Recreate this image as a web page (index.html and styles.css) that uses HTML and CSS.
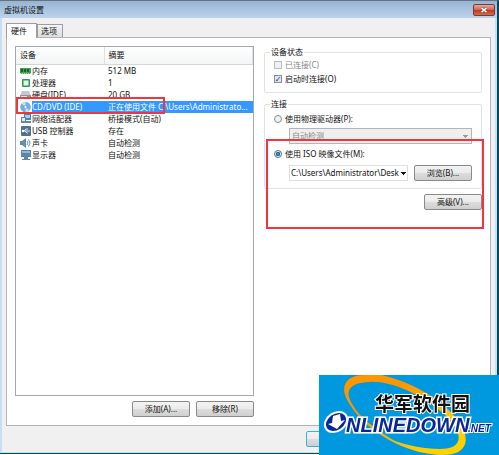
FILE: index.html
```html
<!DOCTYPE html>
<html lang="zh-CN">

<head>
    <meta charset="UTF-8">
    <meta name="viewport" content="width=device-width, initial-scale=1.0">
    <title>虚拟机设置</title>
    <link rel="stylesheet" href="styles.css">
</head>

<body>
    <div class="window">
        <header class="title-bar">
            <h1>虚拟机设置</h1>
            <button class="close-button" aria-label="关闭">
                <svg width="8" height="6" viewBox="0 0 8 6"><path d="M1.500 .8l5 4.400M6.500 .8l-5 4.400" stroke="#6b2a22" stroke-width="2.600"/><path d="M1.500 .8l5 4.400M6.500 .8l-5 4.400" stroke="#fff" stroke-width="1.600"/></svg>
            </button>
        </header>

        <nav class="tabs">
            <button class="tab active">硬件</button>
            <button class="tab">选项</button>
        </nav>

        <main class="panel">
            <!-- Device list -->
            <section class="devices">
                <div class="device-list">
                    <table>
                        <thead>
                            <tr><th class="device-col">设备</th><th>摘要</th></tr>
                        </thead>
                        <tbody>
                            <tr>
                                <td><div class="device"><svg class="icon" viewBox="0 0 12 12"><path fill="#3fa552" d="M0 3h11v6H0z"/><path fill="#1c5f2c" d="M1 4h2v3H1zM4 4h2v3H4zM7 4h2v3H7z"/><path stroke="#a5dcae" stroke-dasharray="1 1" d="M0 8.500h11"/></svg><span>内存</span></div></td>
                                <td>512 MB</td>
                            </tr>
                            <tr>
                                <td><div class="device"><svg class="icon" viewBox="0 0 12 12"><rect x="2" y="2" width="8" height="8" rx="1" fill="#2d9a52"/><path fill="#e8f5ea" d="M3.500 3.500h5v5h-5z"/></svg><span>处理器</span></div></td>
                                <td>1</td>
                            </tr>
                            <tr>
                                <td><div class="device"><svg class="icon" viewBox="0 0 12 12"><path fill="#c3c9cf" d="M2 2h7l2 5H0z"/><path fill="#8d97a1" d="M0 6h11v4H0z"/><path fill="#dfe5ea" d="M1 7h6v1H1z"/></svg><span>硬盘(IDE)</span></div></td>
                                <td>20 GB</td>
                            </tr>
                            <tr class="selected">
                                <td><div class="device"><svg class="icon" viewBox="0 0 12 12"><circle cx="5.500" cy="6" r="5.300" fill="#6fb0e4"/><path fill="#c3e0f6" d="M5.500 6L1.500 2.500a5.300 5.300 0 0 1 4-1.800zM5.500 6l4 3.500a5.300 5.300 0 0 1-4 1.800z"/><circle cx="5.500" cy="6" r="1.500" fill="#fff" stroke="#5c91c4" stroke-width=".6"/></svg><span>CD/DVD (IDE)</span></div></td>
                                <td>正在使用文件 C:\Users\Administrato...</td>
                            </tr>
                            <tr>
                                <td><div class="device"><svg class="icon" viewBox="0 0 12 12"><path fill="#4386b8" d="M4 1h7v6H4z"/><path fill="#a5d2ee" d="M5 2h5v3H5z"/><path fill="#5d89a6" d="M1 4h5v6H1zM6 8h5v2H6z"/><path fill="#d9edf7" d="M2 5h3v3H2z"/></svg><span>网络适配器</span></div></td>
                                <td>桥接模式(自动)</td>
                            </tr>
                            <tr>
                                <td><div class="device"><svg class="icon" viewBox="0 0 12 12"><rect x="1" y="1" width="10" height="10" rx="1" fill="#50708f"/><path fill="none" stroke="#fff" stroke-width=".8" d="M2 6h8M4 6l2-2h2M5 6l2 2h1"/><circle cx="3" cy="6" r="1.200" fill="#fff"/></svg><span>USB 控制器</span></div></td>
                                <td>存在</td>
                            </tr>
                            <tr>
                                <td><div class="device"><svg class="icon" viewBox="0 0 12 12"><path fill="#6c8ba5" d="M0 4h2l4-3v10L2 8H0z"/><path fill="none" stroke="#4c9bd5" d="M7 4q2 2 0 4M8.500 2.500q3 3.500 0 7"/></svg><span>声卡</span></div></td>
                                <td>自动检测</td>
                            </tr>
                            <tr>
                                <td><div class="device"><svg class="icon" viewBox="0 0 12 12"><path fill="#5b86ab" d="M1 1h10v7H1zM4 8h4v2H4zM2 10h8v1H2z"/><path fill="#8db7d8" d="M2 2h8v2H2z"/></svg><span>显示器</span></div></td>
                                <td>自动检测</td>
                            </tr>
                        </tbody>
                    </table>
                    <div class="highlight device-highlight"></div>
                </div>
                <div class="device-actions">
                    <button class="button">添加(A)...</button>
                    <button class="button">移除(R)</button>
                </div>
            </section>

            <!-- Device settings -->
            <section class="settings">
                <fieldset class="status-group">
                    <legend>设备状态</legend>
                    <label class="option disabled"><input type="checkbox" disabled>已连接(C)</label>
                    <label class="option"><input type="checkbox" checked>启动时连接(O)</label>
                </fieldset>

                <fieldset class="connection-group">
                    <legend>连接</legend>
                    <label class="option"><input type="radio" name="connection">使用物理驱动器(P):</label>
                    <select class="drive-select" aria-label="物理驱动器" disabled>
                        <option>自动检测</option>
                    </select>
                    <label class="option"><input type="radio" name="connection" checked>使用 ISO 映像文件(M):</label>
                    <div class="iso-row">
                        <select class="iso-select" aria-label="ISO 映像文件">
                            <option>C:\Users\Administrator\Desk</option>
                        </select>
                        <button class="button">浏览(B)...</button>
                    </div>
                </fieldset>

                <button class="button advanced">高级(V)...</button>
                <div class="highlight iso-highlight"></div>
            </section>
        </main>

        <footer class="dialog-actions">
            <button class="button default" aria-label="确定"></button>
        </footer>
    </div>

    <!-- Site logo -->
    <svg class="watermark" viewBox="0 0 180 80" role="img" aria-label="华军软件园 ONLINEDOWN.NET">
        <defs>
            <linearGradient id="ring" x1="0" y1="0" x2="1" y2="1">
                <stop offset=".3" stop-color="#ff9600"/>
                <stop offset=".8" stop-color="#ffd000"/>
            </linearGradient>
        </defs>
        <path fill="#0099e0" d="M0 0h180v80H0z"/>
        <path fill="url(#ring)" fill-rule="evenodd" d="M46 0C26 0 20 12 30 28C40 46 60 60 76 68C90 75 108 80 124 80C150 80 153 62 137 43C120 22 90 6 62 0zM50 7C68 5 100 17 124 38C144 56 147 74 121 74C104 74 88 70 76 66C62 58 42 44 35 32C24 16 30 8 50 7z"/>
        <text class="logo-name" x="56" y="36">华军软件园</text>
        <text class="logo-domain" x="27" y="57">NLINEDOWN</text>
        <text class="logo-tld" x="149" y="57">.NET</text>
        <ellipse cx="17" cy="47" rx="12" ry="9" fill="#0a2596" stroke="#fff" stroke-width="2" transform="rotate(-35 17 47)"/>
        <path fill="#fff" d="M14 41l7-2 1 7 4-1-8 9-9-5 4-1z"/>
    </svg>
</body>

</html>
```

FILE: styles.css
```css
* {
    box-sizing: border-box;
}

body {
    margin: 0;
    background-color: #fff;
    color: #111;
    font-family: "Noto Sans", "Noto Sans CJK SC", sans-serif;
    font-size: 8px;
    line-height: 12px;
}

button,
select,
input {
    margin: 0;
    font: inherit;
    color: inherit;
}

.window {
    display: flex;
    flex-direction: column;
    min-height: calc(100vh - 1px);
    border-top: 1px solid #66727e;
    border-right: 2px solid #064a58;
    border-bottom: 1px solid #064a58;
    background-color: #f0f0f0;
    box-shadow: inset 2px -1px #c5dff5, inset -2px 0 #c5dff5;
}

.title-bar {
    display: flex;
    justify-content: space-between;
    align-items: center;
    height: 17px;
    padding: 0 2px 0 4px;
    background: linear-gradient(#97b4d2, #bcd3ed);
}

.title-bar h1 {
    margin: 0;
    font-size: 8px;
    font-weight: normal;
}

.close-button {
    display: flex;
    align-items: center;
    justify-content: center;
    width: 22px;
    height: 12px;
    padding: 0;
    border: 1px solid #7a3a35;
    border-radius: 2px;
    background: linear-gradient(#e6a99c, #cf6450 50%, #c0341c 50%, #d46a50);
}

.tabs {
    display: flex;
    align-items: flex-end;
    height: 19px;
    padding-left: 6px;
}

.tab {
    height: 13px;
    padding: 0 5px 0 3px;
    border: 1px solid #9a9da1;
    border-bottom: 0;
    background: linear-gradient(#f4f4f4, #dcdcdc);
    line-height: 12px;
}

.tab.active {
    position: relative;
    height: 15px;
    margin-bottom: -1px;
    padding: 0 9px 0 4px;
    background: #fff;
}

.panel {
    display: flex;
    flex: 1;
    gap: 10px;
    margin: 0 6px;
    padding: 8px;
    border: 1px solid #b4b4b8;
    background-color: #fff;
}

.devices {
    display: flex;
    flex: 239;
    flex-direction: column;
    min-width: 0;
}

.device-list {
    position: relative;
    flex: 1;
    border: 1px solid #a5a9b0;
}

table {
    width: 100%;
    border-collapse: collapse;
    table-layout: fixed;
}

th,
td {
    padding: 0 0 0 4px;
    font-weight: normal;
    text-align: left;
    white-space: nowrap;
}

th {
    height: 17px;
    border-bottom: 1px solid #d5d5d5;
    border-right: 1px solid #e0e0e0;
    background: linear-gradient(#fff, #f3f4f5);
}

.device-col {
    width: 88px;
}

.device {
    display: flex;
    height: 12px;
}

.icon {
    flex: none;
    width: 12px;
    height: 12px;
}

.device span {
    flex: 1;
}

.selected td:last-child,
.selected span {
    background-color: #3399ff;
    color: #fff;
}

.device-actions {
    display: flex;
    justify-content: flex-end;
    gap: 6px;
    padding-top: 5px;
}

.button {
    width: 58px;
    height: 16px;
    padding: 0;
    border: 1px solid #8a8a8a;
    border-radius: 2px;
    background: linear-gradient(#f2f2f2, #ebebeb 50%, #dddddd 50%, #cfcfcf);
    line-height: 12px;
}

.settings {
    position: relative;
    display: flex;
    flex: 218;
    flex-direction: column;
    min-width: 0;
}

fieldset {
    min-width: 0;
    margin: 0;
    padding: 0 9px;
    border: 1px solid #dce4ea;
    border-radius: 2px;
}

legend {
    padding: 0 1px;
    margin-left: -4px;
}

.status-group {
    height: 47px;
}

.connection-group {
    height: 91px;
    margin-top: 5px;
    padding-top: 2px;
}

.option {
    display: flex;
    align-items: center;
    gap: 3px;
    height: 14px;
}

.option.disabled {
    color: #888;
}

input {
    display: flex;
    align-items: center;
    justify-content: center;
    appearance: none;
    width: 8px;
    height: 8px;
    border: 1px solid #8e8f8f;
    background-color: #eef1f5;
}

input:disabled {
    border-color: #bbb;
}

input[type="checkbox"]:checked {
    background-color: #dbe4f3;
}

input[type="checkbox"]:checked::before {
    content: "✓";
    color: #273b91;
    font: bold 8px "DejaVu Sans", sans-serif;
}

input[type="radio"] {
    border-radius: 50%;
}

input[type="radio"]:checked {
    border-color: #52718a;
    background: radial-gradient(#4fc3f0, #0c4f7d 45%, #eee 55%);
}

select {
    appearance: none;
    height: 16px;
    padding: 0 16px 0 2px;
    border: 1px solid #dddfe3;
    border-radius: 0;
    background: #fff conic-gradient(from -45deg at 50% 100%, #111 90deg, transparent 0) no-repeat right 3px center / 6px 3px;
}

.drive-select {
    display: block;
    width: calc(100% - 15px);
    margin: 2px 0 3px 15px;
    background-color: #efefef;
    background-image: conic-gradient(from -45deg at 50% 100%, #999 90deg, transparent 0);
    border-color: #b5b5b5;
    color: #888;
    opacity: 1;
}

.iso-row {
    display: flex;
    gap: 6px;
    margin: 4px 0 0 15px;
}

.iso-select {
    flex: 1;
    min-width: 0;
    padding: 0 7px 0 1px;
    background-position: right 1px center;
    background-size: 5px 3px;
}

.advanced {
    align-self: flex-end;
    margin-top: 5px;
}

.highlight {
    position: absolute;
    border: 2px solid #f5333f;
    pointer-events: none;
}

.device-highlight {
    top: 50px;
    left: 0;
    width: 149px;
    height: 17px;
}

.iso-highlight {
    top: 93px;
    right: -2px;
    left: 2px;
    height: 90px;
}

.dialog-actions {
    display: flex;
    justify-content: flex-end;
    padding: 5px 133px 6px 0;
}

.button.default {
    border-color: #3cb1d8;
}

.watermark {
    position: fixed;
    right: 0;
    bottom: 0;
    width: 180px;
    height: 80px;
}

.logo-name {
    font: bold 19px "Noto Sans CJK SC", sans-serif;
    fill: #111;
    stroke: #fff;
    stroke-width: 2px;
    paint-order: stroke;
}

.logo-domain,
.logo-tld {
    font: italic bold 20px "Liberation Sans", sans-serif;
    fill: #0a2596;
    stroke: #fff;
    stroke-width: 3px;
    paint-order: stroke;
}

.logo-tld {
    font-size: 10px;
    stroke-width: 2px;
}
```
